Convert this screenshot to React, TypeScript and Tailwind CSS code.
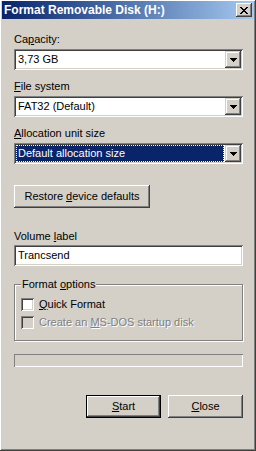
import React from "react";

const sunken =
  "shadow-[inset_1px_1px_#808080,inset_-1px_-1px_#ffffff,inset_2px_2px_#404040,inset_-2px_-2px_#d4d0c8]";
const raised =
  "shadow-[inset_-1px_-1px_#404040,inset_1px_1px_#ffffff,inset_-2px_-2px_#808080,inset_2px_2px_#d4d0c8]";
const scrollRaised =
  "shadow-[inset_-1px_-1px_#404040,inset_1px_1px_#d4d0c8,inset_-2px_-2px_#808080,inset_2px_2px_#ffffff]";

const Arrow = () => (
  <svg width="7" height="4" viewBox="0 0 7 4">
    <path d="M0 0h7v1h-1v1h-1v1h-1v1h-1v-1h-1v-1h-1v-1h-1z" fill="#000" />
  </svg>
);

const Combo = ({ value, focused }: { value: string; focused?: boolean }) => (
  <div className={`flex h-[21px] w-[229px] bg-white p-[2px] ${sunken}`}>
    <div className="flex flex-1 items-center pr-[1px]">
      {focused ? (
        <div className="flex h-full flex-1 items-center border border-dotted border-[#ffffc0] bg-[#0a246a] pl-[1px] text-white">
          {value}
        </div>
      ) : (
        <div className="pl-[2px]">{value}</div>
      )}
    </div>
    <div className={`flex h-[17px] w-[16px] items-center justify-center bg-[#d4d0c8] ${scrollRaised}`}>
      <Arrow />
    </div>
  </div>
);

const Button = ({
  children,
  isDefault,
  className = "",
}: {
  children: React.ReactNode;
  isDefault?: boolean;
  className?: string;
}) =>
  isDefault ? (
    <div className={`h-[23px] border border-black ${className}`}>
      <div className={`flex h-full w-full items-center justify-center ${raised}`}>{children}</div>
    </div>
  ) : (
    <div className={`flex h-[23px] items-center justify-center ${raised} ${className}`}>{children}</div>
  );

const Check = ({ disabled }: { disabled?: boolean }) => (
  <div className={`h-[13px] w-[13px] shrink-0 ${sunken} ${disabled ? "bg-[#d4d0c8]" : "bg-white"}`} />
);

export default function App() {
  return (
    <div className="h-[451px] w-[256px] overflow-hidden bg-[#d4d0c8] pl-[2px] pr-[2px] pt-[1px] font-['Liberation_Sans',Arial,sans-serif] text-[11px] leading-[13px] text-black shadow-[inset_-1px_-1px_#404040,inset_1px_1px_#ffffff,inset_-2px_-2px_#808080]">
      {/* title bar */}
      <div className="flex h-[18px] items-center justify-between bg-gradient-to-r from-[#0a246a] to-[#a6caf0] pl-[2px] pr-[2px]">
        <span className="text-[12px] font-bold text-white">Format Removable Disk (H:)</span>
        <div className={`flex h-[14px] w-[16px] items-center justify-center bg-[#d4d0c8] ${raised}`}>
          <svg width="8" height="7" viewBox="0 0 8 7">
            <path
              d="M0 0h2v1h1v1h2v-1h1v-1h2v1h-1v1h-1v1h-1v1h1v1h1v1h1v1h-2v-1h-1v-1h-2v1h-1v1h-2v-1h1v-1h1v-1h1v-1h-1v-1h-1v-1h-1z"
              fill="#000"
            />
          </svg>
        </div>
      </div>

      <div className="ml-[12px] flex w-[229px] flex-col">
        <div className="mt-[14px]">
          Ca<u>p</u>acity:
        </div>
        <div className="mt-[3px]">
          <Combo value="3,73 GB" />
        </div>

        <div className="mt-[10px]">
          <u>F</u>ile system
        </div>
        <div className="mt-[3px]">
          <Combo value="FAT32 (Default)" />
        </div>

        <div className="mt-[10px]">
          <u>A</u>llocation unit size
        </div>
        <div className="mt-[3px]">
          <Combo value="Default allocation size" focused />
        </div>

        <Button className="mt-[21px] w-[136px]">
          <span>
            Restore <u>d</u>evice defaults
          </span>
        </Button>

        <div className="mt-[22px]">
          Volume <u>l</u>abel
        </div>
        <div className={`mt-[2px] flex h-[21px] items-center bg-white pl-[4px] ${sunken}`}>Trancsend</div>

        {/* group box */}
        <div className="relative mt-[18px] h-[57px] border border-[#808080] pl-[6px] pt-[13px] shadow-[inset_1px_1px_#ffffff,1px_1px_#ffffff]">
          <div className="absolute left-[6px] top-[-7px] bg-[#d4d0c8] px-[1px]">
            Format <u>o</u>ptions
          </div>
          <div className="flex items-center gap-[5px]">
            <Check />
            <span>
              <u>Q</u>uick Format
            </span>
          </div>
          <div className="mt-[5px] flex items-center gap-[5px]">
            <Check disabled />
            <span className="text-[#808080] [text-shadow:1px_1px_0_#ffffff]">
              Create an <u>M</u>S-DOS startup disk
            </span>
          </div>
        </div>

        {/* progress */}
        <div className="mt-[13px] h-[13px] w-[229px] shadow-[inset_1px_1px_#808080,inset_-1px_-1px_#ffffff]" />

        <div className="mt-[28px] flex justify-end gap-[7px]">
          <Button isDefault className="w-[75px]">
            <span>
              <u>S</u>tart
            </span>
          </Button>
          <Button className="w-[75px]">
            <span>
              <u>C</u>lose
            </span>
          </Button>
        </div>
      </div>
    </div>
  );
}
